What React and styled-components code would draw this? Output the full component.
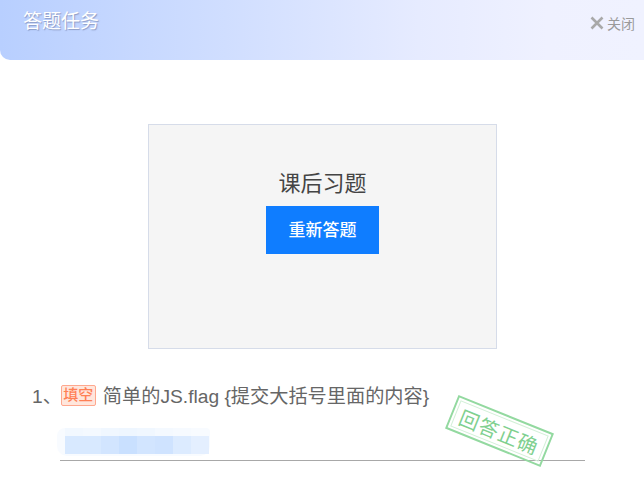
import React from "react";
import styled, { createGlobalStyle } from "styled-components";

const Global = createGlobalStyle`
  html, body { margin: 0; padding: 0; background: #fff; overflow: hidden; }
  * { box-sizing: border-box; }
`;
const font = `"Liberation Sans", "Noto Sans CJK SC", sans-serif`;

const Page = styled.div`
  width: 644px; height: 480px; overflow: hidden; background: #fff;
  font-family: ${font}; display: flex; flex-direction: column;
`;
const Header = styled.header`
  height: 60px; flex: none; display: flex; justify-content: space-between;
  padding: 9px 9px 0 23px; border-bottom-left-radius: 10px;
  background: linear-gradient(90deg, #b8cfff 0%, #d0deff 35%, #e6ebff 65%, #eff1ff 85%, #f0f2ff 100%);
`;
const Title = styled.h1`
  margin: 0; font-size: 19px; line-height: 25px; font-weight: 400; color: #fff;
  text-shadow: 1px 1px 1px rgba(90, 100, 140, 0.5);
`;
const Close = styled.div`
  display: flex; align-items: center; gap: 3px; height: 28px; color: #9a9a9a; font-size: 14px;
`;
const Body = styled.main`
  flex: 1; display: flex; flex-direction: column; padding-top: 64px;
`;
const Card = styled.section`
  width: 349px; height: 225px; margin-left: 148px; background: #f5f5f5;
  border: 1px solid #d6dce9; display: flex; flex-direction: column; align-items: center;
  padding-top: 44px;
`;
const CardTitle = styled.h2`
  margin: 0; font-size: 22px; line-height: 29px; font-weight: 400; color: #444;
`;
const Retry = styled.button`
  width: 113px; height: 48px; margin-top: 8px; padding: 0 0 3px; border: 0; background: #0f7dff; color: #fff;
  font-family: inherit; font-size: 17px; font-weight: 500;
`;
const Question = styled.div`
  margin: 34px 0 0 32px; display: flex; align-items: center; height: 24px;
  font-size: 19.2px; color: #666; white-space: nowrap;
`;
const Tag = styled.span`
  width: 35px; height: 21px; margin: 0 7px 0 -1px; border: 1px solid #ffa88e; border-radius: 2px;
  background: #ffe6dc; color: #ff8055; font-size: 15px; line-height: 18px; text-align: center;
  font-weight: 500;
`;
const Answer = styled.div`
  position: relative; margin: 21px 0 0 60px; width: 525px; height: 33px;
  border-bottom: 1px solid #a8a8a8;
`;
const Mosaic = styled.div`
  width: 153px; height: 28px; margin-left: -3px; padding-left: 8px;
  background: #f8fbff; border-radius: 8px 4px 10px 10px;
`;
const BlurRow = styled.div`
  display: flex;
`;
const Blur = styled.span`
  display: block; width: 18px; height: ${p => p.$h}px; background: ${p => p.$c};
`;
const Stamp = styled.div`
  position: absolute; left: 388px; top: -15px; width: 103px; height: 36px;
  transform: rotate(22deg); border: 2px solid #93d9a0; outline: 1px solid #d3f0d8;
  outline-offset: -5px; color: #80d08f; font-size: 20px; font-weight: 400;
  display: flex; align-items: center; justify-content: center; letter-spacing: 1px;
`;

const upper = ["#f2f8ff", "#f4f9ff", "#f0f7ff", "#eef6ff", "#f0f7ff", "#f4f9ff", "#f6faff"];
const lower = ["#d8e9ff", "#d8e9ff", "#d2e5ff", "#c9e0ff", "#d2e5ff", "#cfe3ff", "#dcebff", "#e4efff"];

export default function App() {
  return (
    <Page>
      <Global />
      <Header>
        <Title>答题任务</Title>
        <Close>
          <svg width="14" height="14" viewBox="0 0 14 14">
            <path d="M1.5 1.5 12.5 12.5M12.5 1.5 1.5 12.5" stroke="#a9a9a9" strokeWidth="2.6" />
          </svg>
          关闭
        </Close>
      </Header>
      <Body>
        <Card>
          <CardTitle>课后习题</CardTitle>
          <Retry>重新答题</Retry>
        </Card>
        <Question>
          1、<Tag>填空</Tag>简单的JS.flag {"{提交大括号里面的内容}"}
        </Question>
        <Answer>
          <Mosaic>
            <BlurRow>{upper.map((c, i) => <Blur key={i} $h={8} $c={c} />)}</BlurRow>
            <BlurRow>{lower.map((c, i) => <Blur key={i} $h={18} $c={c} />)}</BlurRow>
          </Mosaic>
          <Stamp>回答正确</Stamp>
        </Answer>
      </Body>
    </Page>
  );
}
